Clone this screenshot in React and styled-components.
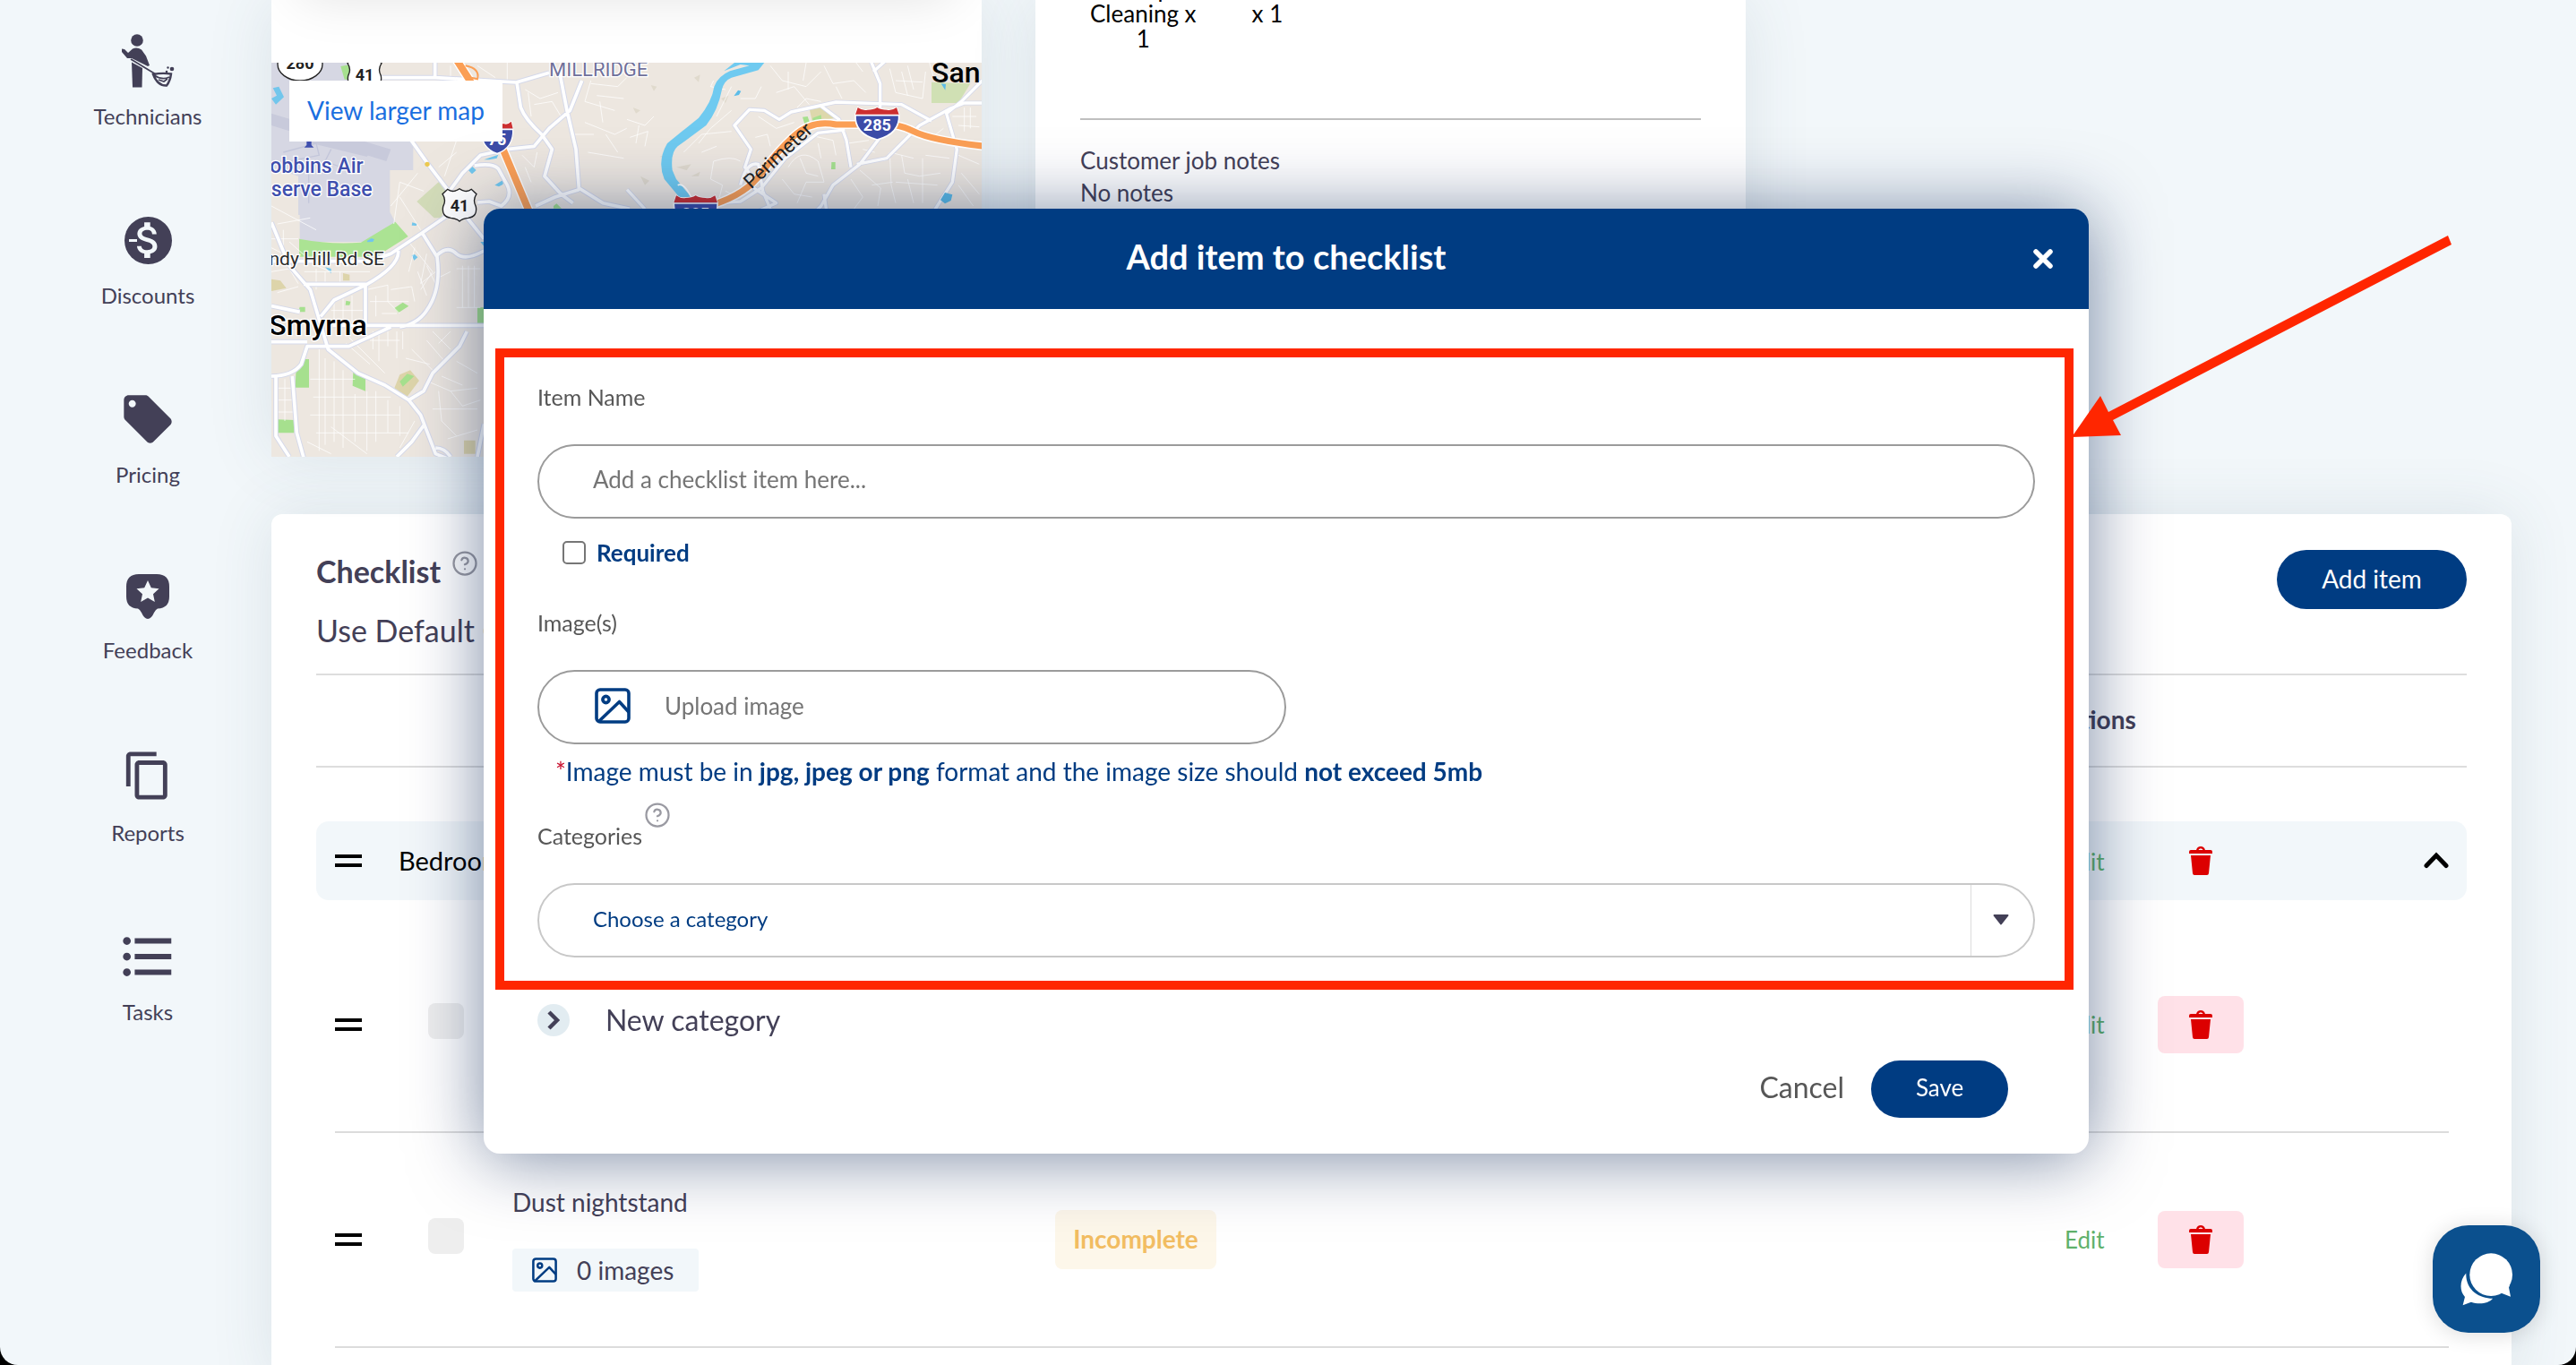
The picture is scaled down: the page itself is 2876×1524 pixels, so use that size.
import React, { useState } from "react";
import styled, { createGlobalStyle } from "styled-components";
import {
  MdAttachMoney,
  MdContentCopy,
  MdFormatListBulleted,
  MdLocalOffer,
} from "react-icons/md";
import { FiHelpCircle } from "react-icons/fi";

const navy = "#003c82";
const ink = "#434057";
const pale = "#f2f7fa";
const red = "#ff2600";

const GlobalStyle = createGlobalStyle`
  * {
    box-sizing: border-box;
  }
  body {
    margin: 0;
    background: #000;
    color: ${ink};
    font-family: Lato, "Liberation Sans", sans-serif;
    font-size: 26px;
    line-height: 32px;
  }
  button, input, select {
    font-family: inherit;
  }
`;

const Page = styled.div`
  display: flex;
  height: 100vh;
  overflow: hidden;
  background-color: ${pale};
  border-radius: 0 0 20px 20px;
`;

/* Sidebar */

const Sidebar = styled.nav`
  flex: 0 0 303px;
  display: flex;
  flex-direction: column;
  align-items: center;
  gap: 95px;
  padding: 41px 0 0 27px;
`;

const NavItem = styled.a`
  display: flex;
  flex-direction: column;
  align-items: center;
  gap: 19px;
  color: ${ink};
  font-size: 24px;
  text-decoration: none;
`;

const NavIcon = styled.span`
  display: flex;
  align-items: center;
  justify-content: center;
  height: ${(props) => props.$height || 54}px;
`;

const DiscountBadge = styled.span`
  position: relative;
  display: flex;
  align-items: center;
  justify-content: center;
  width: 53px;
  height: 53px;
  border-radius: 50%;
  background-color: ${ink};
  color: ${pale};
  &::before {
    content: "";
    position: absolute;
    left: 5px;
    top: 25px;
    width: 9px;
    height: 3px;
    background-color: ${pale};
  }
`;

/* Page content */

const Main = styled.main`
  flex: 1;
  min-width: 0;
  padding-right: 72px;
`;

const TopCards = styled.div`
  display: flex;
  gap: 60px;
  margin-bottom: 64px;
`;

const Card = styled.section`
  background-color: #fff;
  box-shadow: 0 0 70px rgba(60, 90, 110, 0.12);
`;

const TopCard = styled(Card)`
  flex: 0 0 793px;
`;

const CardEnd = styled.div`
  height: 70px;
  padding: 0 30px;
  overflow: hidden;
`;

const RaisedPanel = styled.div`
  height: 60px;
  margin-top: -64px;
  border-radius: 16px;
  background-color: #fff;
  box-shadow: 0 0 60px rgba(0, 0, 0, 0.12);
`;

const MapFrame = styled.div`
  position: relative;
  height: 440px;
  overflow: hidden;
  background-color: #ede7e0;
  svg {
    display: block;
    width: 100%;
    height: 100%;
  }
`;

const MapLink = styled.a`
  position: absolute;
  left: 20px;
  top: 20px;
  padding: 15px 20px 17px;
  background-color: #fff;
  color: #1a6fe0;
  font-size: 28px;
  line-height: 36px;
  text-decoration: none;
`;

const JobCard = styled(TopCard)`
  padding: 0 50px;
`;

const Services = styled.div`
  display: flex;
  align-items: center;
  gap: 62px;
  height: 132px;
  padding: 0 11px 102px;
  overflow: hidden;
  color: #000;
  line-height: 28px;
  text-align: center;
`;

const Service = styled.div`
  flex: none;
`;

const Notes = styled.div`
  padding-top: 27px;
  border-top: 2px solid #bfbfbf;
  line-height: 36px;
  p {
    margin: 0;
  }
`;

/* Checklist */

const ChecklistCard = styled(Card)`
  padding: 40px 50px;
  border-radius: 12px;
`;

const ChecklistHead = styled.div`
  display: flex;
  justify-content: space-between;
  align-items: flex-start;
  padding-bottom: 24px;
`;

const ChecklistTitle = styled.h2`
  display: flex;
  gap: 12px;
  margin: 0 0 18px;
  font-size: 34px;
  line-height: 48px;
  svg {
    color: #9a9aa2;
  }
`;

const ChecklistSub = styled.p`
  margin: 0;
  font-size: 34px;
  line-height: 48px;
`;

const PillButton = styled.button`
  min-width: ${(props) => props.$width}px;
  height: ${(props) => props.$height}px;
  padding-bottom: 4px;
  border: none;
  border-radius: 33px;
  background-color: ${navy};
  color: #fff;
  font-size: ${(props) => props.$size || 26}px;
  cursor: pointer;
`;

const Table = styled.table`
  width: 100%;
  table-layout: fixed;
  border-collapse: separate;
  border-spacing: 0;
  td,
  th {
    padding: 0;
    text-align: left;
  }
`;

const HeadRow = styled.tr`
  height: 105px;
  font-size: 28px;
  th {
    padding-bottom: 4px;
    border-top: 2px solid #ddd;
    border-bottom: 2px solid #ddd;
  }
`;

const SpaceRow = styled.tr`
  height: ${(props) => props.$height}px;
`;

const CategoryRow = styled.tr`
  height: 88px;
  color: #000;
  font-size: 29px;
  td {
    background-color: ${pale};
  }
  td:first-child {
    border-radius: 14px 0 0 14px;
  }
  td:last-child {
    border-radius: 0 14px 14px 0;
  }
`;

const ItemRow = styled.tr`
  height: 240px;
  td:not(:first-child):not(:last-child) {
    border-bottom: 2px solid #dcdcdc;
  }
`;

const DragHandle = styled.button`
  display: block;
  width: 30px;
  height: 14px;
  padding: 0;
  border: solid #000;
  border-width: 4px 0;
  background: none;
  cursor: grab;
`;

const ItemCheck = styled.input`
  appearance: none;
  display: block;
  width: 40px;
  height: 40px;
  margin: 0 0 8px 33px;
  border-radius: 8px;
  background-color: #eee;
`;

const ItemName = styled.div`
  margin-bottom: 36px;
  font-size: 28px;
`;

const ImageCount = styled.button`
  display: flex;
  align-items: center;
  gap: 22px;
  min-width: 208px;
  height: 48px;
  padding: 0 21px 0 22px;
  border: none;
  border-radius: 4px;
  background-color: ${pale};
  color: ${ink};
  font-size: 28px;
`;

const Status = styled.span`
  display: inline-block;
  min-width: 180px;
  padding: 16px 0 18px;
  border-radius: 8px;
  background-color: #fdf7ea;
  color: #f2bd62;
  font-size: 28px;
  font-weight: 700;
  text-align: center;
`;

const EditLink = styled.a`
  padding-left: 15px;
  color: #5fb16b;
  font-size: 26px;
  text-decoration: none;
`;

const DeleteButton = styled.button`
  display: flex;
  align-items: center;
  justify-content: center;
  width: 96px;
  height: 64px;
  border: none;
  border-radius: 8px;
  background-color: ${(props) => (props.$plain ? "transparent" : "#ffe1e8")};
  cursor: pointer;
`;

const ToggleButton = styled.button`
  display: block;
  margin-left: auto;
  padding: 0 20px;
  border: none;
  background: none;
`;

/* Modal */

const Overlay = styled.div`
  position: fixed;
  inset: 0;
  display: flex;
  align-items: center;
  justify-content: center;
  padding: 0 4px 4px 0;
`;

const Modal = styled.div`
  width: 62.4%;
  border-radius: 18px;
  background-color: #fff;
  box-shadow: 0 4px 80px rgba(0, 28, 78, 0.52);
`;

const ModalHeader = styled.div`
  display: grid;
  grid-template-columns: 1fr auto 1fr;
  align-items: center;
  height: 112px;
  padding: 0 36px;
  border-radius: 18px 18px 0 0;
  background-color: ${navy};
  color: #fff;
`;

const ModalTitle = styled.h1`
  grid-column: 2;
  margin: 0;
  padding-bottom: 6px;
  font-size: 38px;
  line-height: 48px;
`;

const CloseButton = styled.button`
  justify-self: end;
  display: flex;
  padding: 4px;
  border: none;
  background: none;
  cursor: pointer;
`;

const FormFrame = styled.div`
  position: relative;
  margin: 44px 17px 0 13px;
  padding: 28px 33px 26px 37px;
  border: 10px solid ${red};
`;

const Arrow = styled.svg`
  position: absolute;
  left: calc(100% + 8px);
  top: -136px;
`;

const Field = styled.div`
  margin-bottom: ${(props) => props.$gap || 0}px;
`;

const Label = styled.label`
  display: block;
  margin-bottom: 37px;
  color: #575757;
  font-size: 25px;
`;

const CategoryLabel = styled.div`
  display: flex;
  gap: 2px;
  svg {
    margin-top: -22px;
    color: #9a9aa2;
  }
`;

const TextInput = styled.input`
  display: block;
  width: 100%;
  height: 83px;
  padding: 0 60px 4px;
  border: 2px solid #9b9b9b;
  border-radius: 42px;
  font-size: 26px;
  &::placeholder {
    color: #757575;
  }
`;

const RequiredRow = styled.div`
  display: flex;
  align-items: center;
  gap: 12px;
  padding-left: 28px;
  margin: 22px 0 46px;
  label {
    color: ${navy};
    font-weight: 700;
  }
`;

const CheckBox = styled.input`
  appearance: none;
  width: 26px;
  height: 26px;
  margin: 0;
  border: 2px solid #767676;
  border-radius: 5px;
  background-color: #fff;
  &:checked {
    background-color: ${navy};
  }
`;

const UploadBox = styled.label`
  display: flex;
  align-items: center;
  gap: 38px;
  width: 50%;
  height: 83px;
  padding: 0 62px 2px;
  border: 2px solid #9b9b9b;
  border-radius: 42px;
  color: #757575;
  font-size: 26px;
  cursor: pointer;
  input {
    display: none;
  }
`;

const Hint = styled.p`
  margin: 14px 0 40px;
  padding-left: 20px;
  color: ${navy};
  font-size: 28px;
  span {
    color: #c8102e;
  }
`;

const SelectWrap = styled.div`
  display: flex;
  align-items: center;
  position: relative;
  height: 83px;
  border: 2px solid #c8c8c8;
  border-radius: 42px;
`;

const Select = styled.select`
  appearance: none;
  width: 100%;
  height: 79px;
  padding: 0 60px 4px;
  border: none;
  border-radius: 42px;
  background: none;
  color: ${navy};
  font-size: 24px;
`;

const SelectArrow = styled.span`
  position: absolute;
  right: 0;
  display: flex;
  align-items: center;
  width: 70px;
  height: 79px;
  padding-left: 24px;
  border-left: 1px solid #ddd;
  pointer-events: none;
`;

const NewCategory = styled.button`
  display: flex;
  align-items: center;
  gap: 40px;
  margin: 14px 60px 25px;
  padding: 0;
  border: none;
  background: none;
  color: ${ink};
  font-size: 32px;
  line-height: 40px;
  cursor: pointer;
`;

const RoundChevron = styled.span`
  display: flex;
  align-items: center;
  justify-content: center;
  width: 36px;
  height: 36px;
  border-radius: 50%;
  background-color: #e2ecf1;
`;

const ModalFooter = styled.div`
  display: flex;
  align-items: center;
  justify-content: flex-end;
  gap: 30px;
  padding: 0 90px 40px;
`;

const CancelButton = styled.button`
  padding: 0 0 4px;
  border: none;
  background: none;
  color: #575757;
  font-size: 32px;
  cursor: pointer;
`;

const ChatButton = styled.button`
  position: fixed;
  right: 40px;
  bottom: 36px;
  display: flex;
  align-items: center;
  justify-content: center;
  width: 120px;
  height: 120px;
  border: none;
  border-radius: 40px;
  background-color: #0b508e;
  box-shadow: 0 2px 24px rgba(0, 0, 0, 0.14);
  cursor: pointer;
`;

/* Icons */

const TechnicianIcon = () => (
  <svg width="60" height="60" viewBox="0 0 60 60" fill={ink}>
    <ellipse cx="18" cy="7" rx="6.8" ry="6.8" />
    <path d="M1 16.500 4 17 8 21l5-4.500q5-2.500 10 1l5 7 4 10.500-2 1L12 27H7l-6-7z" />
    <path d="M12 31.500 24 38l-.5 21.500H13z" />
    <path d="M11 28 39 45" stroke={ink} strokeWidth="1.800" />
    <path
      d="M36 45q10-2 20-.5-1 8-5 13-10 .5-15-12.500z"
      fill="none"
      stroke={ink}
      strokeWidth="2.400"
    />
    <path d="M37 46q9 6 17 2M42 51l6 2 4-3" fill="none" stroke={ink} strokeWidth="1.600" />
    <circle cx="57" cy="39" r="2.300" />
    <circle cx="52.500" cy="37.500" r="1.200" />
    <circle cx="51" cy="42" r="1.300" />
  </svg>
);

const FeedbackIcon = () => (
  <svg width="48" height="50" viewBox="0 0 48 50">
    <path
      d="M14 0h20q14 0 14 14v11q0 13-13 13.500-2 .5-4 4.500-3 7-7 7t-7-7q-2-4-4-4.500Q0 38 0 25V14Q0 0 14 0z"
      fill={ink}
    />
    <path
      d="m24 7 3.800 8.200 8.700 1-6.500 6 1.800 8.800L24 26.600 16.200 31l1.800-8.800-6.500-6 8.700-1z"
      fill={pale}
    />
  </svg>
);

const ImageIcon = ({ size }) => (
  <svg width={size} height={size} viewBox="0 0 40 40" fill="none" stroke={navy} strokeWidth="3.600">
    <rect x="2" y="2" width="36" height="36" rx="4" />
    <circle cx="12.500" cy="13" r="3.600" />
    <path d="M5 37 27.500 15.500 38 27" strokeLinejoin="round" />
  </svg>
);

const TrashIcon = () => (
  <svg width="26" height="32" viewBox="0 0 26 32" fill="#dc0000">
    <path d="M2 4h22q2 0 2 2v2H0V6q0-2 2-2zM2 10h22l-2 20q-.2 2-2 2H6q-1.800 0-2-2z" />
    <path d="M9 4.500Q10 1.200 13 1.200t4 3.300" fill="none" stroke="#dc0000" strokeWidth="2.200" />
  </svg>
);

const ChatIcon = () => (
  <svg width="59" height="59" viewBox="168 172 176 178" fill="#fff">
    <circle cx="270" cy="245" r="72" />
    <path d="m334 278-4 10 6 31-33-13z" />
    <path d="M186 240c-21 22-24 58-4 80l-7 28 28-11c27 9 59 5 73-12-46 0-92-29-90-85z" />
  </svg>
);

/* Map drawing */

const Interstate = ({ x, y, width = 146, children }) => (
  <g transform={`translate(${x} ${y})`}>
    <g transform={`scale(${width / 146} 1)`}>
      <path
        d="M8 0q17 12 32 8 20 0 33-8 13 8 33 8 15 4 32-8l8 24q4 64-73 84Q-4 88 0 24z"
        fill="#3c4ca8"
        stroke="#fff"
        strokeWidth="5"
      />
      <path d="M8 0q17 12 32 8 20 0 33-8 13 8 33 8 15 4 32-8l8 24H0z" fill="#cc2f30" />
      <path d="M0 26h146" stroke="#fff" strokeWidth="5" />
    </g>
    <text x={width / 2} y="79" fill="#fff" fontSize="54" fontWeight="700" textAnchor="middle">
      {children}
    </text>
  </g>
);

const UsRoute = ({ x, y, children }) => (
  <g transform={`translate(${x} ${y})`}>
    <path
      d="M20 4q10 8 22 6 10-2 18-8 8 6 18 8 12 2 22-6l17 16q-14 20-2 42 6 34-26 38-20 2-29 11-9-9-29-11-32-4-26-38 12-22-2-42z"
      fill="#fff"
      stroke="#222"
      strokeWidth="4"
    />
    <text x="60" y="79" fill="#222" fontSize="54" fontWeight="700" textAnchor="middle">
      {children}
    </text>
  </g>
);

const leftRoads = [
  "M440 220 525 340 590 425 640 500 712 590",
  "M360 50H550L820 66 930 34",
  "M548 0V50",
  "M822 66 835 150Q850 190 905 240L940 290 915 380 970 440 1010 470",
  "M965 30 990 160 1020 290 1030 420 1110 470 1200 490",
  "M1040 60 1000 160 930 220 880 280 790 290 700 310 640 370 600 425",
  "M885 480 950 450 1030 425",
  "M680 345Q740 335 760 355L790 410Q810 450 770 480L730 465 690 468",
  "M600 505 505 570 400 640 330 665H0",
  "M0 535 60 680 130 760 160 860 190 960 290 1040 380 1080 460 1130 500 1180 550 1310 600 1330",
  "M108 742H315V885",
  "M425 630Q430 680 315 745L210 795 165 850",
  "M505 570 555 650Q570 760 520 830 490 875 430 885",
  "M555 645Q590 610 620 640 650 665 712 630",
  "M205 880H720",
  "M400 885 260 950H120L100 1010Q70 1050 0 1050",
  "M0 935H120",
  "M0 815 95 835",
  "M655 900 630 950 540 1040 510 1100 460 1130",
  "M70 1050 85 1240 110 1330",
  "M15 1050V1250L60 1320",
  "M510 1215 470 1270 420 1320",
  "M550 1290Q580 1290 600 1320",
  "M712 1210 690 1320",
];

const rightRoads = [
  "M0 455 60 520",
  "M815 20 848 100V190",
  "M825 60 870 20",
  "M1200 165H1130L1080 185 980 240 870 350 770 370",
  "M848 280 780 370 690 440 650 510 620 540",
  "M1190 90 1120 160 1070 200 1105 320 1090 430 1020 540",
  "M410 540 500 500 410 440",
  "M1020 225 920 170 700 162 550 195 510 220 460 190 410 187 360 240 415 320 395 380 410 400",
  "M650 175 710 220 735 290 750 380",
  "M300 500 380 495 450 450 530 350 640 265 730 255",
  "M380 440Q400 360 440 370L455 460 480 520",
  "M660 470 670 540",
];

const leftStreets =
  "M20 540 130 520M0 590H90M40 560V660M60 600 150 680 200 700M110 700H330M150 760V690M180 700V740M230 700V740M0 700 60 690 90 740M20 770 90 750M320 760 390 745 390 800 430 840M330 800H460M350 780V850M370 840H420M400 760 470 750 480 800M210 800V870M240 790V880M270 780V870M200 830H310M460 600 540 700M480 620 460 700M520 640 500 740 550 700M560 720 600 700M640 680V820M660 680V820M680 680V820M620 690H700M620 820H700M340 900V960M360 900V1000M390 900V950M420 900V990M330 930H430M440 900V960M560 940 600 900M580 1000 520 930M600 960 540 900M160 960V1300M180 990V1280M210 1000V1270M240 1030V1290M130 1060H280M140 1120H400M130 1180H430M150 1240H460M280 1110V1270M320 1100V1300M350 1100V1270M390 1130V1240M430 1150V1250M480 1200 430 1290M20 1090H70M20 1130H75M20 1170H78M45 1060V1200M120 1270 200 1310M200 1220 320 1310M530 1070 600 1100 690 1090M560 1100 570 1200 620 1250M600 1100 640 1150 700 1130M540 1160 690 1160M590 1260 690 1230M620 1000 690 1040M570 1050 640 1080M470 960 540 1030M450 990 530 1010M410 540 430 400 510 430M400 480 490 370M430 450 500 560M560 350 620 300M580 380 620 260M850 90 900 120 960 100M880 140 940 130 970 180M860 100 870 180M1000 240H1080M1070 60 1050 130 1150 160M1090 110 1180 120M1050 200 1150 240 1190 220M1120 240 1160 300M1060 300 1180 320M1070 70 1160 80 1190 50M1100 130 1110 200M840 310 880 350 890 300M850 350 870 400M640 120 700 80M600 10V50M690 10 750 50M790 0V60M250 940 330 1010M260 920 380 1040M150 560 0 480M0 620 40 640M490 700 520 780M540 700 500 760M520 680 560 760";

const rightStreets =
  "M480 40 520 90 600 110 650 60M500 130 560 110 610 170M540 60V120M600 30 590 90M660 40 690 100 760 90 800 130M700 110 720 150M760 20 790 60M880 50 900 130 990 150 1000 60M920 60 940 140M900 90 990 95M940 40 960 120M1010 20 1030 90 1110 60M0 220 60 240 90 210M10 280 70 260 60 310M40 240 30 300M190 330 250 270 350 260M240 300 280 250 350 190M250 330 300 310M350 110 300 210M290 90 280 110 330 120M440 210 500 250 560 230M430 280 470 270 480 310M540 380Q580 310 640 360L660 430 600 430 570 500M580 350 600 400 640 410M520 420 560 470 620 480M290 360Q350 340 380 360M290 360 280 420 320 440 310 480M750 420 790 480 760 520M780 390 850 450 840 510M820 440 890 430M860 360 880 330 960 350M880 330 885 440 900 500M920 340 930 400 980 410 1050 400M990 350 990 500M940 420 960 500M900 430 1040 440M1060 250 1010 290M1000 340 1080 350M1110 340 1180 370M1130 180V260M1150 180V250M1090 210H1170M1110 240 1180 245M1120 400 1180 470M1110 440 1160 510M600 270 690 290 700 340M640 300 650 350M740 300 810 290M790 320 830 330M570 180 600 150 650 160M330 460 370 480M450 110 430 150 380 150";

const MapDrawing = () => (
  <svg
    viewBox="0 0 2379 1320"
    preserveAspectRatio="xMinYMin slice"
    fontFamily='Roboto, "Liberation Sans", sans-serif'
    role="img"
    aria-label="Map of Smyrna"
  >
    <rect width="2379" height="1320" fill="#ede7e0" />
    <path d="M0 0H280L350 60H475V360H397V500L415 535 330 600H95V510H90V380L0 350z" fill="#d6d7e3" />
    <path d="M0 170 400 290 385 330 0 210zM100 240 330 300 320 315 95 260z" fill="#c8cadb" />
    <path d="M40 300 150 270 160 310 60 330M200 290 180 330 260 360M125 370V470" fill="none" stroke="#c3c6da" strokeWidth="4" />
    <path d="M93 590Q200 610 300 602L415 533 458 582 350 650H93z" fill="#abe393" />
    <path d="M232 12 270 5 262 56H245zM105 993H126V1088H80L82 1040zM274 1035 315 1050V1100L272 1082zM20 1195 78 1197 76 1240 15 1240zM690 820H712V875H690zM412 822 440 803 460 815 425 838zM95 818H113V835H90zM250 797 265 800 262 812H248zM945 480 955 472 972 488H945z" fill="#a6e08e" />
    <path d="M487 465 560 400 590 425 570 520 545 520z" fill="#d3dcb9" />
    <path d="M430 1045 465 1030 495 1065 455 1118 412 1090zM0 725 30 730 50 755 0 765zM645 1265H683V1310H645zM240 705 262 710V730H240z" fill="#d8cf9c" opacity="0.800" />
    <path d="M430 1068 455 1042 478 1050 440 1085z" fill="#a6e08e" />
    <path d="M5 85 25 80 42 115 15 140 0 120 18 110zM655 355 670 345 686 360 672 373zM712 325 760 308 755 320 730 325zM748 410 780 390 775 408 762 415zM472 535 488 540 485 546 470 545zM320 597 335 588 345 592 340 600 322 601zM470 645 480 642 490 652 478 662zM180 685 200 690 200 706zM700 600 712 600V615z" fill="#72c6ec" />
    <path d={leftStreets} fill="none" stroke="#fff" strokeWidth="3" opacity="0.750" />
    <path d={leftRoads.join("")} fill="none" stroke="#d5d9ea" strokeWidth="17" strokeLinejoin="round" />
    <path d={leftRoads.join("")} fill="none" stroke="#fff" strokeWidth="11" strokeLinejoin="round" />
    <path d="M620 -10 665 60 735 200 780 300 862 495" fill="none" stroke="#fff" strokeWidth="32" />
    <path d="M620 -10 665 60 735 200 780 300 862 495" fill="none" stroke="#fb9f55" strokeWidth="24" />
    <path d="M650 10Q700 20 690 55L670 50" fill="none" stroke="#fb9f55" strokeWidth="6" />
    <circle cx="522" cy="340" r="8" fill="#ecc94f" />

    <g transform="translate(1191 -30)">
      <path d="M1020 95 1150 100 1110 165H1020z" fill="#d0e0b4" />
      <path d="M610 180 660 175 700 215 620 225z" fill="#ddd8ac" />
      <path d="M588 212 605 210 612 230 595 235zM622 215 650 205 652 222 622 234zM685 363H698V387H684z" fill="#a6e08e" />
      <path d="M80 105 100 110 90 125zM225 80 245 70 240 95zM110 345 140 330 130 350zM165 380 215 370 200 390zM215 410 245 395 240 410zM45 410 75 425 60 440zM20 180 45 190 30 200zM315 150 340 140 330 165z" fill="#e0dacd" />
      <path d={rightStreets} fill="none" stroke="#fff" strokeWidth="3" opacity="0.750" />
      <path d={rightRoads.join("")} fill="none" stroke="#d5d9ea" strokeWidth="15" strokeLinejoin="round" />
      <path d={rightRoads.join("")} fill="none" stroke="#fff" strokeWidth="10" strokeLinejoin="round" />
      <path
        d="M325 58 360 30H460L440 55 350 80Q325 90 318 120 305 190 265 240L170 310Q145 330 152 390L165 420 215 480H175L125 420Q100 360 135 300L240 215Q285 160 292 110 305 75 345 58L410 40 380 36z"
        fill="#6fcaf0"
      />
      <path d="M358 142 372 122 382 125 375 138zM1052 100 1068 102 1066 122zM1050 490 1065 465 1090 472 1085 492 1065 502z" fill="#5cbce8" />
      <path d="M170 440Q190 430 215 480" fill="none" stroke="#fff" strokeWidth="5" />
      <path d="M290 505Q400 470 450 400T560 275 700 237H840Q900 230 960 260T1200 310" fill="none" stroke="#fff" strokeWidth="30" />
      <path d="M290 505Q400 470 450 400T560 275 700 237H840Q900 230 960 260T1200 310" fill="none" stroke="#fb9f55" strokeWidth="21" />
      <text transform="translate(416 455) rotate(-43)" fontSize="66" fill="#222">
        Perimeter
      </text>
      <Interstate x={765} y={180}>285</Interstate>
      <Interstate x={157} y={475}>285</Interstate>
      <text x="1020" y="95" fontSize="96" fontWeight="500" fill="#000">
        San
      </text>
    </g>

    <ellipse cx="96" cy="5" rx="75" ry="55" fill="#fff" stroke="#222" strokeWidth="4" />
    <text x="96" y="22" fontSize="54" fontWeight="700" fill="#222" textAnchor="middle">
      280
    </text>
    <UsRoute x={252} y={-18}>41</UsRoute>
    <UsRoute x={570} y={420}>41</UsRoute>
    <Interstate x={703} y={197} width={106}>75</Interstate>
    <path d="M118 262H134V276L142 284H110L118 276z" fill="#3f4fae" />
    <g stroke="#fff" strokeWidth="8" paintOrder="stroke">
      <text x="930" y="45" fontSize="66" fill="#70709a">
        MILLRIDGE
      </text>
      <text x="308" y="368" fontSize="69" fontWeight="500" fill="#3f4fae" textAnchor="end">
        Dobbins Air
      </text>
      <text x="338" y="447" fontSize="69" fontWeight="500" fill="#3f4fae" textAnchor="end">
        Reserve Base
      </text>
      <text x="378" y="677" fontSize="63" fill="#2b2b2b" textAnchor="end">
        Windy Hill Rd SE
      </text>
      <text x="-8" y="912" fontSize="96" fontWeight="500" fill="#000">
        Smyrna
      </text>
    </g>
  </svg>
);

const navItems = [
  { name: "Technicians", icon: <TechnicianIcon /> },
  {
    name: "Discounts",
    icon: (
      <DiscountBadge>
        <MdAttachMoney size={54} />
      </DiscountBadge>
    ),
  },
  { name: "Pricing", icon: <MdLocalOffer size={64} /> },
  { name: "Feedback", icon: <FeedbackIcon />, height: 50 },
  { name: "Reports", icon: <MdContentCopy size={58} />, height: 58 },
  { name: "Tasks", icon: <MdFormatListBulleted size={70} /> },
];

const items = [
  { id: 1, name: "", images: null, status: "" },
  { id: 2, name: "Dust nightstand", images: 0, status: "Incomplete" },
];

const App = () => {
  const [name, setName] = useState("");
  const [required, setRequired] = useState(false);

  return (
    <>
      <GlobalStyle />
      <Page>
        <Sidebar>
          {navItems.map((item) => (
            <NavItem href="#" key={item.name}>
              <NavIcon $height={item.height}>{item.icon}</NavIcon>
              {item.name}
            </NavItem>
          ))}
        </Sidebar>

        <Main>
          <TopCards>
            <TopCard>
              <CardEnd>
                <RaisedPanel />
              </CardEnd>
              <MapFrame>
                <MapDrawing />
                <MapLink href="#">View larger map</MapLink>
              </MapFrame>
            </TopCard>
            <JobCard>
              <Services>
                <Service>
                  Deep
                  <br />
                  Cleaning x
                  <br />1
                </Service>
                <Service>x 1</Service>
              </Services>
              <Notes>
                <p>Customer job notes</p>
                <p>No notes</p>
              </Notes>
            </JobCard>
          </TopCards>

          <ChecklistCard>
            <ChecklistHead>
              <div>
                <ChecklistTitle>
                  Checklist
                  <FiHelpCircle size={30} strokeWidth={1.8} />
                </ChecklistTitle>
                <ChecklistSub>Use Default Checklist</ChecklistSub>
              </div>
              <PillButton $width={212} $height={66} $size={28}>
                Add item
              </PillButton>
            </ChecklistHead>
            <Table>
              <colgroup>
                <col width="21" />
                <col width="71" />
                <col width="127" />
                <col width="606" />
                <col />
                <col width="119" />
                <col width="96" />
                <col width="229" />
                <col width="20" />
              </colgroup>
              <thead>
                <HeadRow>
                  <th colSpan="5" />
                  <th>Actions</th>
                  <th colSpan="3" />
                </HeadRow>
              </thead>
              <tbody>
                <SpaceRow $height={60} />
                <CategoryRow>
                  <td />
                  <td>
                    <DragHandle aria-label="Move category" />
                  </td>
                  <td colSpan="3">Bedroom</td>
                  <td>
                    <EditLink href="#">Edit</EditLink>
                  </td>
                  <td>
                    <DeleteButton $plain aria-label="Delete category">
                      <TrashIcon />
                    </DeleteButton>
                  </td>
                  <td colSpan="2">
                    <ToggleButton aria-label="Collapse category">
                      <svg width="28" height="20" viewBox="0 0 28 20">
                        <path
                          d="M3 16.500 14 5l11 11.500"
                          fill="none"
                          stroke="#000"
                          strokeWidth="5"
                          strokeLinecap="round"
                        />
                      </svg>
                    </ToggleButton>
                  </td>
                </CategoryRow>
                <SpaceRow $height={20} />
                {items.map((item) => (
                  <ItemRow key={item.id}>
                    <td />
                    <td>
                      <DragHandle aria-label="Move item" />
                    </td>
                    <td>
                      <ItemCheck type="checkbox" aria-label="Mark item as done" />
                    </td>
                    <td>
                      {item.name && (
                        <>
                          <ItemName>{item.name}</ItemName>
                          <ImageCount>
                            <ImageIcon size={28} />
                            {item.images} images
                          </ImageCount>
                        </>
                      )}
                    </td>
                    <td>{item.status && <Status>{item.status}</Status>}</td>
                    <td>
                      <EditLink href="#">Edit</EditLink>
                    </td>
                    <td>
                      <DeleteButton aria-label="Delete item">
                        <TrashIcon />
                      </DeleteButton>
                    </td>
                    <td />
                    <td />
                  </ItemRow>
                ))}
              </tbody>
            </Table>
          </ChecklistCard>
        </Main>
      </Page>

      <Overlay>
        <Modal role="dialog" aria-labelledby="modal-title">
          <ModalHeader>
            <ModalTitle id="modal-title">Add item to checklist</ModalTitle>
            <CloseButton aria-label="Close">
              <svg width="22" height="22" viewBox="0 0 22 22">
                <path
                  d="M3 3l16 16M19 3 3 19"
                  stroke="#fff"
                  strokeWidth="5.500"
                  strokeLinecap="round"
                />
              </svg>
            </CloseButton>
          </ModalHeader>

          <FormFrame>
            <Field>
              <Label htmlFor="item-name">Item Name</Label>
              <TextInput
                id="item-name"
                placeholder="Add a checklist item here..."
                value={name}
                onChange={(e) => setName(e.target.value)}
              />
            </Field>
            <RequiredRow>
              <CheckBox
                id="required"
                type="checkbox"
                checked={required}
                onChange={(e) => setRequired(e.target.checked)}
              />
              <label htmlFor="required">Required</label>
            </RequiredRow>
            <Field>
              <Label htmlFor="images">Image(s)</Label>
              <UploadBox>
                <ImageIcon size={40} />
                Upload image
                <input id="images" type="file" accept=".jpg,.jpeg,.png" />
              </UploadBox>
              <Hint>
                <span>*</span>Image must be in <b>jpg, jpeg or png</b> format and the image size
                should <b>not exceed 5mb</b>
              </Hint>
            </Field>
            <Field>
              <CategoryLabel>
                <Label htmlFor="category">Categories</Label>
                <FiHelpCircle size={30} strokeWidth={1.8} />
              </CategoryLabel>
              <SelectWrap>
                <Select id="category">
                  <option>Choose a category</option>
                </Select>
                <SelectArrow>
                  <svg width="18" height="12" viewBox="0 0 18 12">
                    <path d="M1.500 1h15L9 10.500z" fill={ink} stroke={ink} strokeWidth="2" strokeLinejoin="round" />
                  </svg>
                </SelectArrow>
              </SelectWrap>
            </Field>
            <Arrow width="425" height="225" viewBox="0 0 425 225" fill={red}>
              <path d="M420 0 424 10 46 206 55 223 0 225 32 179 41 197z" />
            </Arrow>
          </FormFrame>

          <NewCategory>
            <RoundChevron>
              <svg width="16" height="22" viewBox="0 0 16 22">
                <path d="M3 2l9 9-9 9" fill="none" stroke={ink} strokeWidth="4.500" />
              </svg>
            </RoundChevron>
            New category
          </NewCategory>

          <ModalFooter>
            <CancelButton>Cancel</CancelButton>
            <PillButton $width={153} $height={64}>
              Save
            </PillButton>
          </ModalFooter>
        </Modal>
      </Overlay>

      <ChatButton aria-label="Open chat">
        <ChatIcon />
      </ChatButton>
    </>
  );
};

export default App;
